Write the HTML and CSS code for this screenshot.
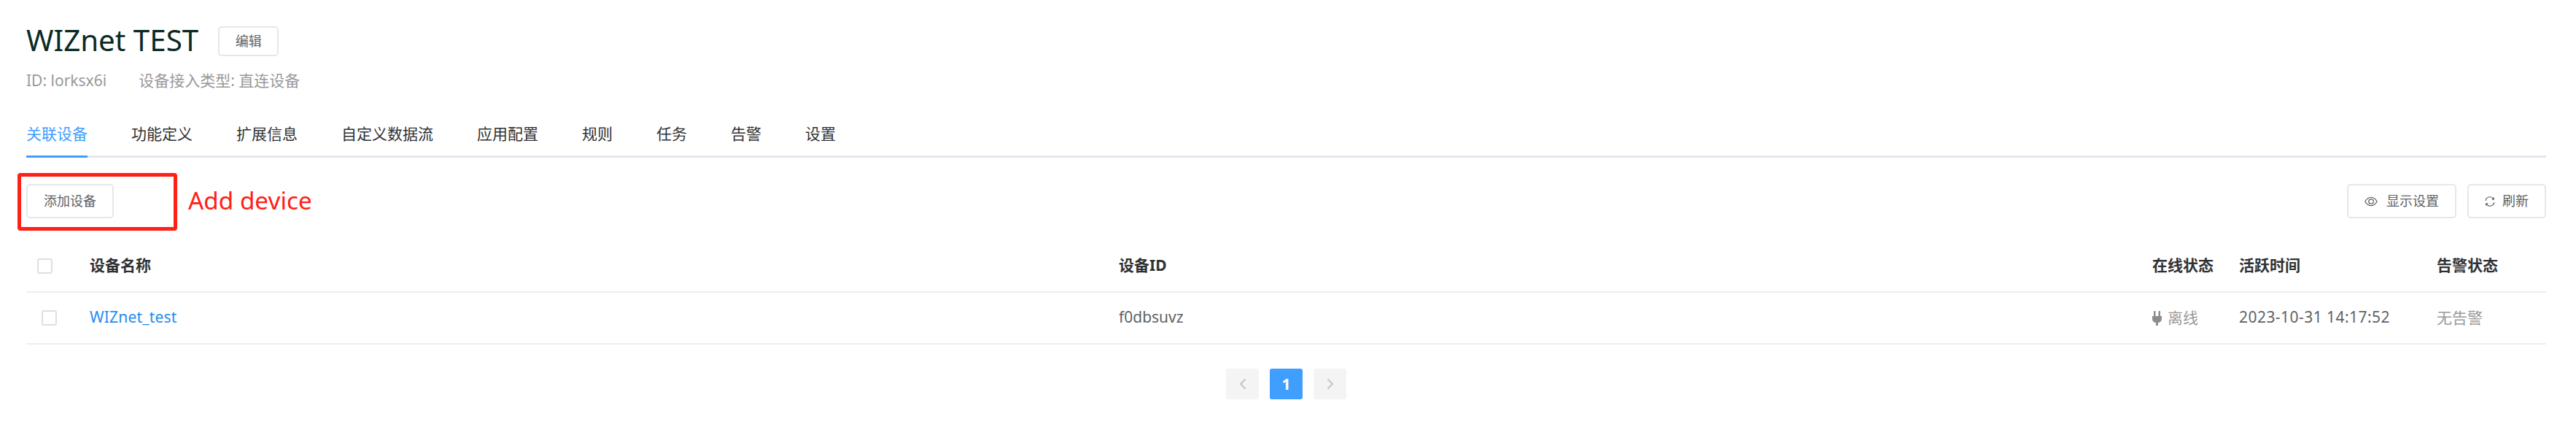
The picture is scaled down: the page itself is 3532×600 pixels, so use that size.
FILE: index.html
```html
<!DOCTYPE html>
<html lang="zh-CN">
<head>
<meta charset="utf-8">
<title>WIZnet TEST</title>
<link rel="stylesheet" href="styles.css">
</head>
<body>
<main class="page">
  <header class="head">
    <div class="title-row">
      <h1 class="title">WIZnet TEST</h1>
      <button class="btn btn-edit">编辑</button>
    </div>
    <div class="meta">
      <span>ID: lorksx6i</span>
      <span>设备接入类型: 直连设备</span>
    </div>
  </header>
  <nav class="tabs">
    <a class="tab active">关联设备</a>
    <a class="tab">功能定义</a>
    <a class="tab">扩展信息</a>
    <a class="tab">自定义数据流</a>
    <a class="tab">应用配置</a>
    <a class="tab">规则</a>
    <a class="tab">任务</a>
    <a class="tab">告警</a>
    <a class="tab">设置</a>
  </nav>
  <section class="toolbar">
    <button class="btn btn-tool">添加设备</button>
    <div class="annot-box"></div>
    <div class="annot-text">Add device</div>
    <div class="tool-right">
      <button class="btn btn-tool btn-show">
        <svg class="ico-eye" viewBox="0 0 18 14" aria-hidden="true"><path d="M.8 7C3 3.2 5.8 1.3 9 1.3S15 3.2 17.2 7C15 10.800 12.200 12.700 9 12.700S3 10.800 .8 7Z"/><circle cx="9" cy="7" r="3.200"/></svg>
        <span>显示设置</span>
      </button>
      <button class="btn btn-tool btn-refresh">
        <svg class="ico-refresh" viewBox="0 0 15 15" aria-hidden="true"><path d="M1.200 6.200A6.300 6.300 0 0 1 12.400 3.300"/><path d="M13.800 8.800A6.300 6.300 0 0 1 2.600 11.700"/><path class="fill" d="M13.800 .9V5H9.800Z"/><path class="fill" d="M1.200 14.100V10H5.200Z"/></svg>
        <span>刷新</span>
      </button>
    </div>
  </section>
  <section class="table">
    <div class="tr th">
      <div class="cell cell-check"><span class="check"></span></div>
      <div class="cell">设备名称</div>
      <div class="cell">设备ID</div>
      <div class="cell">在线状态</div>
      <div class="cell">活跃时间</div>
      <div class="cell">告警状态</div>
    </div>
    <div class="tr td">
      <div class="cell cell-check cell-check-row"><span class="check"></span></div>
      <div class="cell link">WIZnet_test</div>
      <div class="cell">f0dbsuvz</div>
      <div class="cell muted status">
        <svg class="ico-plug" viewBox="0 0 13 20" aria-hidden="true"><path d="M2 0h2.500v7H2zM8.500 0H11v7H8.500zM0 7h13v3.500a5.500 5.500 0 0 1-5 5.400V20H5v-4.100a5.500 5.500 0 0 1-5-5.400z"/></svg>
        <span>离线</span>
      </div>
      <div class="cell date">2023-10-31 14:17:52</div>
      <div class="cell muted">无告警</div>
    </div>
  </section>
  <nav class="pager">
    <span class="pg"><svg class="ico-chev" viewBox="0 0 10 16" aria-hidden="true"><path d="M8.500 1.500 2 8l6.500 6.500"/></svg></span>
    <span class="pg current">1</span>
    <span class="pg"><svg class="ico-chev" viewBox="0 0 10 16" aria-hidden="true"><path d="M1.500 1.500 8 8l-6.500 6.500"/></svg></span>
  </nav>
</main>
</body>
</html>
```

FILE: styles.css
```css
* { box-sizing: border-box; }
html, body { margin: 0; background: #fff; }
body {
  font-family: "Noto Sans", "Noto Sans CJK SC", sans-serif;
  font-size: 21px;
  color: #606266;
}
.page { padding: 36px 41px 0 36px; }

.btn {
  font: inherit;
  font-size: 18px;
  color: #606266;
  background: #fff;
  border: 2px solid #e4e7ed;
  border-radius: 5px;
  padding: 0 22px 3px;
  display: inline-flex;
  align-items: center;
  justify-content: center;
}

.title-row { display: flex; align-items: center; height: 41px; gap: 27px; }
.title { margin: 0 0 3px; font-size: 40.300px; font-weight: 400; line-height: 38px; color: #0a2a25; }
.btn-edit { width: 83px; height: 41px; padding-left: 0; padding-right: 0; }
.meta { display: flex; gap: 44px; margin-top: 18px; height: 31px; line-height: 30px; color: #999; }

.tabs {
  display: flex;
  margin-top: 27px;
  border-bottom: 3px solid #e4e7ed;
  height: 63px;
}
.tab {
  height: 63px;
  line-height: 61px;
  margin-right: 60px;
  color: #303133;
  border-bottom: 3px solid transparent;
}
.tab.active { color: #409eff; border-bottom-color: #409eff; }

.toolbar { position: relative; display: flex; justify-content: space-between; margin-top: 36px; }
.btn-tool { height: 47px; }
.btn-show { gap: 12px; }
.btn-refresh { gap: 10px; }
.tool-right { display: flex; gap: 15px; }
.annot-box {
  position: absolute;
  left: -12px;
  top: -15px;
  width: 219px;
  height: 79px;
  border: 5px solid #ff2116;
  border-radius: 4px;
}
.annot-text {
  position: absolute;
  left: 222px;
  top: -1px;
  font-size: 33.300px;
  line-height: 46px;
  color: #ff2116;
}

.ico-eye { width: 18px; height: 14px; fill: none; stroke: #606266; stroke-width: 1.300; margin-top: 3px; }
.ico-refresh { width: 14px; height: 14px; fill: none; stroke: #606266; stroke-width: 1.300; margin-top: 3px; }
.ico-refresh .fill { fill: #606266; stroke: none; }

.table { margin-top: 31px; }
.tr {
  display: grid;
  grid-template-columns: 87px 1411px 1417px 119px 271px 1fr;
  align-items: center;
  height: 71px;
  border-bottom: 2px solid #ebeef5;
}
.th { font-weight: 700; color: #303133; }
.cell { white-space: nowrap; padding-bottom: 3px; }
.th .cell { padding-bottom: 5px; }
.th .cell-check, .td .cell-check { display: flex; padding: 0 0 0 15px; }
.td .cell-check-row { padding-left: 21px; }
.check {
  width: 21px;
  height: 21px;
  border: 2px solid #dcdfe6;
  border-radius: 3px;
  background: #fff;
}
.link { color: #1d8cf0; letter-spacing: .2px; }
.muted { color: #999; }
.date { letter-spacing: .45px; }
.status { display: flex; align-items: center; gap: 8px; }
.ico-plug { width: 13px; height: 20px; fill: #8c8c8c; margin-top: 3px; }

.pager { display: flex; justify-content: center; gap: 15px; margin-top: 33px; }
.pg {
  width: 45px;
  height: 42px;
  border-radius: 3px;
  background: #f4f4f5;
  display: flex;
  align-items: center;
  justify-content: center;
  font-size: 21px;
  font-weight: 700;
}
.pg.current { background: #409eff; color: #fff; }
.ico-chev { width: 10px; height: 16px; fill: none; stroke: #c0c4cc; stroke-width: 2; }
```
